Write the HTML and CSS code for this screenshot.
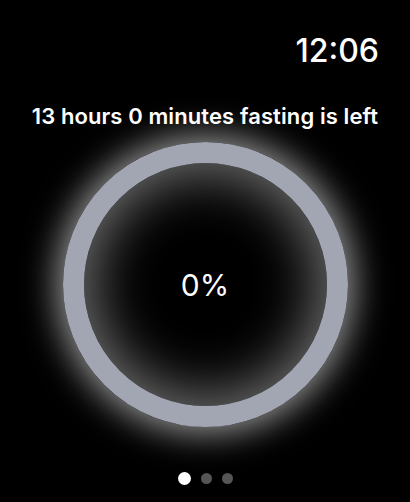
FILE: index.html
```html
<!DOCTYPE html>
<html>
<head>
<meta charset="utf-8">
<link rel="stylesheet" href="styles.css">
</head>
<body>
<div class="screen">
  <div class="status"><span class="time">12:06</span></div>
  <div class="title">13 hours 0 minutes fasting is left</div>
  <div class="ring-wrap">
    <div class="ring"><span class="pct">0%</span></div>
  </div>
  <div class="dots">
    <span class="dot active"></span>
    <span class="dot"></span>
    <span class="dot"></span>
  </div>
</div>
</body>
</html>
```
FILE: styles.css
```css
html, body {
  margin: 0;
  padding: 0;
  background: #000;
}
.screen {
  width: 410px;
  height: 502px;
  background: #000;
  color: #fff;
  font-family: Inter, "Liberation Sans", Arial, sans-serif;
  display: flex;
  flex-direction: column;
  align-items: center;
  overflow: hidden;
}
.status {
  align-self: stretch;
  display: flex;
  justify-content: flex-end;
  padding: 31px 31px 0 0;
  height: 40px;
}
.time {
  font-size: 32px;
  font-weight: 500;
  line-height: 40px;
}
.title {
  margin-top: 33px;
  font-size: 22px;
  font-weight: 600;
  line-height: 24px;
  white-space: nowrap;
  letter-spacing: 0.1px;
}
.ring-wrap {
  margin-top: 14px;
  display: flex;
  justify-content: center;
}
.ring {
  width: 243px;
  height: 243px;
  border: 21px solid #a2a6b2;
  border-radius: 50%;
  display: flex;
  align-items: center;
  justify-content: center;
  box-shadow: 0 0 34px 6px rgba(255, 255, 255, 0.6), inset 0 0 55px 8px rgba(255, 255, 255, 0.45);
}
.pct {
  font-size: 30px;
  line-height: 30px;
}
.dots {
  margin-top: 45px;
  display: flex;
  gap: 10px;
  align-items: center;
}
.dot {
  width: 11px;
  height: 11px;
  border-radius: 50%;
  background: #555;
}
.dot.active {
  width: 13px;
  height: 13px;
  background: #fff;
}
```
